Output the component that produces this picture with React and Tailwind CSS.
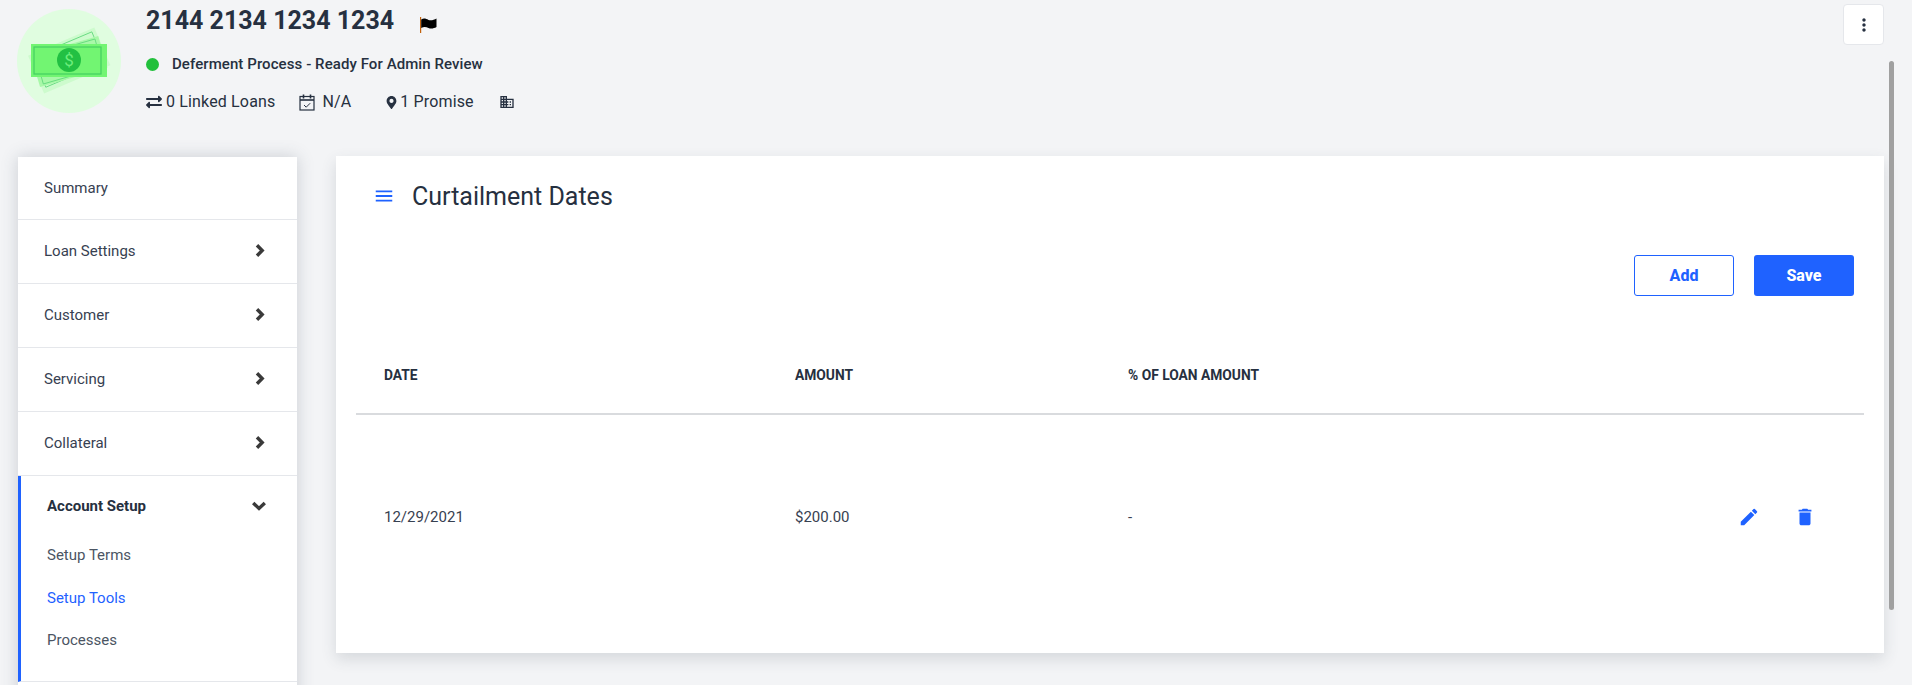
import { FaExchangeAlt, FaMapMarkerAlt } from "react-icons/fa";
import { MdDelete, MdDomain, MdEdit, MdMenu, MdMoreVert } from "react-icons/md";

const NAV = ["Loan Settings", "Customer", "Servicing", "Collateral"];

function MoneyLogo() {
  return (
    <svg width="104" height="104" viewBox="0 0 104 104" className="shrink-0">
      <circle cx="52" cy="52" r="52" fill="#e0fde0" />
      <g transform="rotate(-23 52 51)">
        <rect x="16" y="31" width="72" height="41" fill="#cdfbcd" />
        <rect x="20" y="34" width="64" height="33" fill="none" stroke="#5ed87a" strokeWidth="0.8" />
      </g>
      <g transform="rotate(-16 52 52)">
        <rect x="17" y="36" width="70" height="33" fill="#a8f8a8" />
        <rect x="21" y="38" width="62" height="29" fill="none" stroke="#5ed87a" strokeWidth="0.8" />
      </g>
      <rect x="14" y="35" width="76" height="33" fill="#72f572" />
      <rect x="17" y="38" width="67" height="27" fill="none" stroke="#44cf62" strokeWidth="1.2" />
      <circle cx="52" cy="51" r="12" fill="#22c043" />
      <text x="52" y="57" textAnchor="middle" fontSize="17" fill="#6cee7c" fontFamily="Roboto, sans-serif">$</text>
    </svg>
  );
}

function FlagIcon() {
  return (
    <svg width="17" height="16" viewBox="0 0 17 16">
      <rect x="0" y="0" width="1.2" height="16" fill="#c2620e" />
      <path d="M1.2 2.5 C4 0.8 6 1.8 8.5 3 C11 3.8 14 3 16.5 1.5 L16.5 10 C14 11.5 11 12 8.5 11 C6 10 4 9.6 1.2 11 Z" fill="#000" />
    </svg>
  );
}

function CalendarIcon() {
  return (
    <svg width="16" height="17" viewBox="0 0 16 17" fill="none" stroke="#263040" className="ml-[24px]">
      <rect x="1" y="2.5" width="14" height="13.5" strokeWidth="1.2" />
      <path d="M1 6h14" strokeWidth="1.6" />
      <path d="M4.5 0.5v4M11.5 0.5v4" strokeWidth="1.6" />
      <path d="M5 11l2.2 2.2 4-4" strokeWidth="1" />
    </svg>
  );
}

function ChevronRight() {
  return (
    <svg width="10" height="13" viewBox="0 0 10 13" fill="none" stroke="#3a3a3a" strokeWidth="3.4" className="-mt-[2px]">
      <path d="M2 1.2 L7.2 6.5 L2 11.8" />
    </svg>
  );
}

function ChevronDown() {
  return (
    <svg width="14" height="10" viewBox="0 0 14 10" fill="none" stroke="#3a3a3a" strokeWidth="3.4">
      <path d="M1.2 2 L7 7.4 L12.8 2" />
    </svg>
  );
}

function Header() {
  return (
    <div className="flex h-[156px] justify-between pl-[17px] pr-[28px] pt-[5px]">
      <div className="flex items-start">
        <div className="pt-[4px]">
          <MoneyLogo />
        </div>
        <div className="ml-[25px] flex flex-col">
          <div className="flex h-[32px] items-center">
            <span className="text-[25px] font-bold text-[#263040]">2144 2134 1234 1234</span>
            <span className="ml-[26px] mt-[7px]">
              <FlagIcon />
            </span>
          </div>
          <div className="mt-[17px] flex h-[20px] items-center">
            <span className="h-[13px] w-[13px] rounded-full bg-[#22c03c]" />
            <span className="ml-[13px] text-[15px] font-medium tracking-[0.08px] text-[#263040]">
              Deferment Process - Ready For Admin Review
            </span>
          </div>
          <div className="mt-[16px] flex h-[24px] items-center text-[16px] tracking-[0.15px] text-[#263040]">
            <FaExchangeAlt size={16} />
            <span className="ml-[4px]">0 Linked Loans</span>
            <CalendarIcon />
            <span className="ml-[7px]">N/A</span>
            <FaMapMarkerAlt size={13} className="ml-[34px]" />
            <span className="ml-[2px]">1 Promise</span>
            <MdDomain size={16} className="ml-[25px]" />
          </div>
        </div>
      </div>
      <button className="-mt-[1px] flex h-[41px] w-[41px] items-center justify-center rounded-[4px] border border-[#e5e7eb] bg-white text-[#263040]">
        <MdMoreVert size={20} />
      </button>
    </div>
  );
}

function Sidebar() {
  return (
    <div className="ml-[18px] mt-[1px] w-[279px] shrink-0 bg-white text-[15px] shadow-[0_0_16px_rgba(60,75,90,0.22)]">
      <div className="flex h-[63px] items-center border-b border-[#e5e7eb] pl-[26px] text-[#374151]">Summary</div>
      {NAV.map((label) => (
        <div
          key={label}
          className="flex h-[64px] items-center justify-between border-b border-[#e5e7eb] pl-[26px] pr-[32px] text-[#374151]"
        >
          {label}
          <ChevronRight />
        </div>
      ))}
      <div className="h-[206px] border-b border-l-[3px] border-b-[#e5e7eb] border-l-[#1f62ff] pl-[26px] pr-[31px]">
        <div className="flex h-[60px] items-center justify-between font-bold text-[#263040]">
          Account Setup
          <ChevronDown />
        </div>
        <div className="mt-[8px] text-[#4b5563]">Setup Terms</div>
        <div className="mt-[20px] text-[#1f62ff]">Setup Tools</div>
        <div className="mt-[20px] text-[#4b5563]">Processes</div>
      </div>
      {/* next row runs off the bottom of the page */}
      <div className="h-[64px]" />
    </div>
  );
}

function CurtailmentCard() {
  return (
    <div className="ml-[39px] h-[497px] w-[1548px] shrink-0 bg-white shadow-[0_6px_14px_rgba(60,75,90,0.16)]">
      <div className="flex h-[80px] items-center pl-[37px]">
        <MdMenu size={22} className="text-[#1f62ff]" />
        <span className="ml-[17px] mt-[1px] text-[25px] text-[#263040]">Curtailment Dates</span>
      </div>
      <div className="mt-[19px] flex justify-end gap-[20px] pr-[30px]">
        <button className="h-[41px] w-[100px] rounded-[3px] border border-[#1f62ff] bg-white text-[16px] font-extrabold text-[#1f62ff]">
          Add
        </button>
        <button className="h-[41px] w-[100px] rounded-[3px] bg-[#1f62ff] text-[16px] font-extrabold text-white">
          Save
        </button>
      </div>
      <div className="mx-[20px] mt-[39px]">
        <div className="grid h-[80px] grid-cols-[411px_333px_1fr] items-center border-b-2 border-[#d9dbde] pl-[28px] pt-[3px] text-[13.8px] font-bold text-[#263040]">
          <span>DATE</span>
          <span>AMOUNT</span>
          <span>% OF LOAN AMOUNT</span>
        </div>
        <div className="mt-[62px] grid h-[80px] grid-cols-[411px_333px_1fr_auto] items-center pl-[28px] text-[15px] text-[#374151]">
          <span>12/29/2021</span>
          <span>$200.00</span>
          <span>-</span>
          <div className="flex items-center gap-[34px] pr-[48px] text-[#1f62ff]">
            <MdEdit size={22} />
            <MdDelete size={22} />
          </div>
        </div>
      </div>
    </div>
  );
}

export default function App() {
  return (
    <div className="relative h-[685px] overflow-hidden bg-[#f3f4f6] font-['Roboto',sans-serif]">
      <Header />
      <div className="flex items-start">
        <Sidebar />
        <CurtailmentCard />
      </div>
      {/* page scrollbar */}
      <div className="absolute right-[18px] top-[61px] h-[549px] w-[5px] rounded-[3px] bg-[#a0a0a0]" />
    </div>
  );
}
